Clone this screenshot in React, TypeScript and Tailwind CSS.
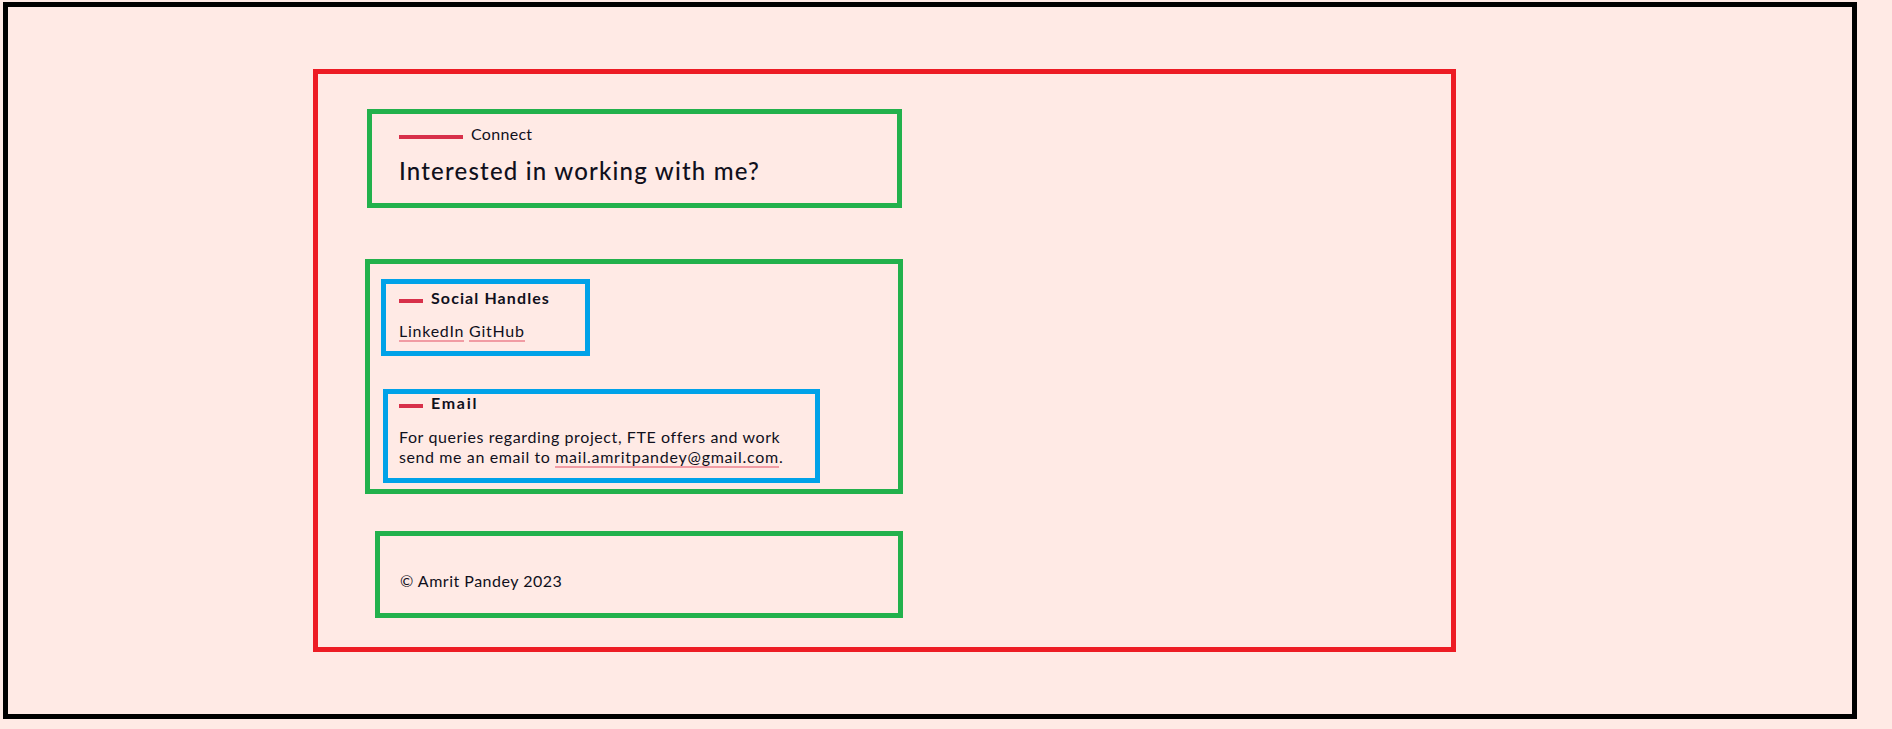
export default function App() {
  const font = { fontFamily: 'Lato, "Noto Sans", sans-serif' };

  return (
    <div className="min-h-screen w-full bg-[#ffeae5] text-[#10101c]" style={font}>
      <div className="pt-[2px] pl-[3px]">
        {/* page frame */}
        <div className="w-[1854px] h-[717px] border-[5px] border-black pt-[62px] pl-[305px]">
          {/* section */}
          <section className="w-[1143px] h-[583px] border-[5px] border-[#ed1c24] flex flex-col">
            {/* heading */}
            <div className="ml-[49px] mt-[35px] w-[535px] h-[99px] border-[5px] border-[#22b14c] pl-[27px] pt-[8px]">
              <div className="flex items-start gap-[8px] leading-[24px] text-[16px] tracking-[0.3px]">
                <span className="mt-[13px] block w-[64px] h-[4px] bg-[#d8304a]" />
                <span>Connect</span>
              </div>
              <h2 className="mt-[9px] text-[24px] leading-[32px] font-medium tracking-[1.2px]">
                Interested in working with me?
              </h2>
            </div>

            {/* contact */}
            <div className="ml-[47px] mt-[51px] w-[538px] h-[235px] border-[5px] border-[#22b14c] flex flex-col">
              <div className="ml-[11px] mt-[15px] w-[209px] h-[77px] border-[5px] border-[#00a2e8] pl-[13px] pt-[2px]">
                <div className="flex items-start gap-[8px] leading-[24px] text-[16px]">
                  <span className="mt-[13px] block w-[24px] h-[4px] bg-[#d8304a]" />
                  <h3 className="font-bold tracking-[1.1px]">Social Handles</h3>
                </div>
                <p className="mt-[9px] text-[16px] leading-[24px] tracking-[0.75px]">
                  <a className="border-b-2 border-[#f19ca4]">LinkedIn</a>{' '}
                  <a className="border-b-2 border-[#f19ca4]">GitHub</a>
                </p>
              </div>

              <div className="ml-[13px] mt-[33px] w-[437px] h-[94px] border-[5px] border-[#00a2e8] pl-[11px] pt-[1px]">
                <div className="flex items-start gap-[8px] leading-[16px] text-[16px]">
                  <span className="mt-[9px] block w-[24px] h-[4px] bg-[#d8304a]" />
                  <h3 className="font-bold tracking-[1.7px]">Email</h3>
                </div>
                <p className="mt-[16px] text-[16px] leading-[20px] tracking-[0.6px]">
                  For queries regarding project, FTE offers and work
                  <br />
                  send me an email to{' '}
                  <a className="border-b-2 border-[#f19ca4] tracking-[0.75px]">mail.amritpandey@gmail.com</a>.
                </p>
              </div>
            </div>

            {/* footer */}
            <footer className="ml-[57px] mt-[37px] w-[528px] h-[87px] border-[5px] border-[#22b14c] pl-[20px] pt-[33px] text-[16px] leading-[24px] tracking-[0.5px]">
              © Amrit Pandey 2023
            </footer>
          </section>
        </div>
      </div>
    </div>
  );
}
